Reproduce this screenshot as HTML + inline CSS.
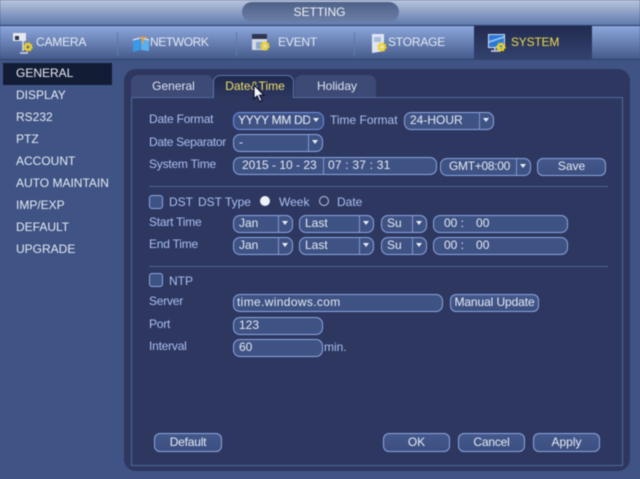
<!DOCTYPE html>
<html><head><meta charset="utf-8"><style>
html,body{margin:0;padding:0;width:640px;height:479px;overflow:hidden;background:#3f5384}
#r{position:relative;width:640px;height:479px;overflow:hidden;background:#3f5384;font-family:"Liberation Sans",sans-serif;font-size:12px;filter:blur(.5px)}
#r div{position:absolute;box-sizing:border-box;white-space:nowrap}
.l{color:#a9c0f2;line-height:14px}
.n{letter-spacing:-.22px}
.f{height:18px;border:1.5px solid #8ba6e0;border-radius:7px;background:#3f5284;color:#e6ebf5;line-height:15px;padding-left:5px}
.d{width:14px;top:0;bottom:0;right:0;border-left:1.5px solid #7f97cf}
.d:after{content:"";position:absolute;left:3px;top:5px;border:3.5px solid transparent;border-top:4px solid #e8edf8;border-bottom:0}
.b{height:19px;border:1.5px solid #8ba6e0;border-radius:6px;background:linear-gradient(#44588c,#3c4f80);color:#e6ebf5;text-align:center;line-height:16px}
.t{top:26px;height:34px;color:#e4eaf6;font-size:12px;line-height:32px;letter-spacing:-.2px}
.m{left:16px;color:#e6ebf5;line-height:14px;font-size:12px}
.s{width:1px;top:32px;height:24px;background:#5f78ad}
.hr{height:1px;background:#4d6595}
</style></head><body><div id="r">
<div style="left:0;top:0;width:640px;height:25px;background:linear-gradient(#b9c5dc,#5e7aae)"></div>
<div style="left:0;top:25px;width:640px;height:1px;background:#2c3b66"></div>
<div style="left:242px;top:2px;width:157px;height:20px;border-radius:10px;background:linear-gradient(#4f6188,#6c7fa6);color:#f0f3fa;text-align:center;line-height:20px;font-size:12px;padding-right:2px">SETTING</div>
<div style="left:0;top:26px;width:640px;height:34px;background:linear-gradient(#8ca7dc,#435888)"></div>
<div style="left:0;top:59px;width:640px;height:1px;background:#33436f"></div>
<div class="s" style="left:117px"></div><div class="s" style="left:236px"></div><div class="s" style="left:354px"></div>
<div style="left:474px;top:26px;width:118px;height:34px;background:linear-gradient(#222b50,#33436e)"></div>

<svg style="position:absolute;left:0;top:26px" width="640" height="34" viewBox="0 0 640 34">
<defs><g id="g"><circle r="2.7" fill="none" stroke="#f2d420" stroke-width="2.2"/><circle r="4.2" fill="none" stroke="#f2d420" stroke-width="1.2" stroke-dasharray="1.7 1.6"/></g></defs>
<path d="M13 7h13v8H13z" fill="#e6e9f0"/><rect x="15" y="10" width="4" height="4" fill="#2c3350"/><path d="M23 15v10M20 27h8" stroke="#d5dbe8" stroke-width="1.6"/><use href="#g" x="28" y="21"/>
<path d="M133 15l7-2v11l-7 2z" fill="#3a98e6"/><path d="M141 13l8 2v10l-8-1z" fill="#58b0f0"/><path d="M133 14l7-2M141 12l8 2" stroke="#dce9f7" stroke-width="1.2"/><path d="M139 11.5h8M143 11.5v6" stroke="#e8983a" stroke-width="1.6"/>
<rect x="252" y="8" width="15" height="5" fill="#2f3650"/><rect x="252" y="13" width="15" height="11" fill="#d3d9e6"/><rect x="256" y="16" width="7" height="7" fill="#8ea7d2"/><use href="#g" x="265" y="20"/>
<path d="M372 8h12v17l-12 2z" fill="#dfe6f4"/><path d="M374 11h7v5h-7z" fill="#a9bcdd"/><use href="#g" x="382" y="21"/>
<rect x="488.500" y="8.500" width="16" height="13" fill="#2a78d8" stroke="#d5dceb"/><path d="M489 15l15-5v2l-15 5z" fill="#8fc0f0"/><path d="M495 22v2M491 25h9" stroke="#cfd6e6" stroke-width="1.5"/><use href="#g" x="501" y="21"/>
</svg>
<div class="t" style="left:36px">CAMERA</div>
<div class="t" style="left:150px;letter-spacing:-.4px">NETWORK</div>
<div class="t" style="left:278px">EVENT</div>
<div class="t" style="left:388px">STORAGE</div>
<div class="t" style="left:511px;color:#eed94a">SYSTEM</div>

<div style="left:3px;top:63px;width:109px;height:22px;background:#131c35"></div>
<div class="m" style="top:66px">GENERAL</div>
<div class="m" style="top:88px">DISPLAY</div>
<div class="m" style="top:110px">RS232</div>
<div class="m" style="top:132px">PTZ</div>
<div class="m" style="top:154px">ACCOUNT</div>
<div class="m" style="top:176px">AUTO MAINTAIN</div>
<div class="m" style="top:198px">IMP/EXP</div>
<div class="m" style="top:220px">DEFAULT</div>
<div class="m" style="top:242px">UPGRADE</div>

<div style="left:124px;top:69px;width:506px;height:402px;border-radius:12px;background:#2e375f"></div>
<div style="left:131px;top:97px;width:492px;height:369px;border:1px solid #4d6a9d"></div>
<div style="left:131px;top:75px;width:82px;height:22px;border-radius:7px 7px 0 0;background:#3d4a76;color:#dfe5f2;text-align:center;line-height:22px;font-size:12px;padding-left:3px">General</div>
<div style="left:213px;top:75px;width:81px;height:23px;border:1.5px solid #5a78ab;border-bottom:0;border-radius:7px 7px 0 0;background:linear-gradient(#1f2a4e,#2e375f);color:#efe06a;text-align:center;line-height:21px;font-size:12px;padding-left:3px">Date&amp;Time</div>
<div style="left:295px;top:75px;width:81px;height:22px;border-radius:7px 7px 0 0;background:#3d4a76;color:#dfe5f2;text-align:center;line-height:22px;font-size:12px;padding-left:3px">Holiday</div>

<div class="l n" style="left:149px;top:112px">Date Format</div>
<div class="f" style="left:233px;top:112px;width:91px;border-color:#6f93e8;color:#f0f3fa;overflow:hidden;padding-left:4px;letter-spacing:-.3px">YYYY MM DD<div class="d" style="width:13px;border-left:0;background:#3f5284"></div></div>
<div class="l" style="left:330px;top:113px">Time Format</div>
<div class="f" style="left:404px;top:112px;width:90px">24-HOUR<div class="d"></div></div>
<div class="l n" style="left:149px;top:135px;letter-spacing:-.32px">Date Separator</div>
<div class="f" style="left:233px;top:134px;width:90px">-<div class="d"></div></div>
<div class="l n" style="left:149px;top:157px">System Time</div>
<div class="f" style="left:233px;top:157px;width:204px;padding-left:8px"><span>2015 - 10 - 23</span><div style="left:89px;top:0;bottom:0;width:1px;background:#7f97cf"></div><div style="left:94px;top:0;letter-spacing:.2px">07 : 37 : 31</div></div>
<div class="f" style="left:440px;top:158px;width:91px;padding-left:8px;letter-spacing:-.3px">GMT+08:00<div class="d"></div></div>
<div class="b" style="left:537px;top:158px;width:69px;height:18px;line-height:15px">Save</div>
<div class="hr" style="left:149px;top:186px;width:459px"></div>

<div style="left:149px;top:195px;width:14px;height:14px;border:1.5px solid #8ba6e0;border-radius:3px;background:#3f5284"></div>
<div class="l" style="left:169px;top:195px">DST</div>
<div class="l" style="left:198px;top:195px">DST Type</div>
<div style="left:260px;top:196px;width:10px;height:10px;border-radius:50%;background:#eef1f8"></div>
<div class="l" style="left:279px;top:195px">Week</div>
<div style="left:319px;top:196px;width:10px;height:10px;border-radius:50%;border:1.5px solid #b9c9ee"></div>
<div class="l" style="left:337px;top:195px">Date</div>

<div class="l n" style="left:149px;top:215px">Start Time</div>
<div class="f" style="left:233px;top:215px;width:60px">Jan<div class="d"></div></div>
<div class="f" style="left:299px;top:215px;width:75px">Last<div class="d"></div></div>
<div class="f" style="left:381px;top:215px;width:46px">Su<div class="d"></div></div>
<div class="f" style="left:433px;top:215px;width:135px;padding-left:10px">00 :<span style="margin-left:12px">00</span></div>
<div class="l n" style="left:149px;top:237px">End Time</div>
<div class="f" style="left:233px;top:237px;width:60px">Jan<div class="d"></div></div>
<div class="f" style="left:299px;top:237px;width:75px">Last<div class="d"></div></div>
<div class="f" style="left:381px;top:237px;width:46px">Su<div class="d"></div></div>
<div class="f" style="left:433px;top:237px;width:135px;padding-left:10px">00 :<span style="margin-left:12px">00</span></div>
<div class="hr" style="left:149px;top:266px;width:459px"></div>

<div style="left:149px;top:273px;width:14px;height:14px;border:1.5px solid #8ba6e0;border-radius:3px;background:#3f5284"></div>
<div class="l" style="left:169px;top:274px">NTP</div>
<div class="l n" style="left:149px;top:294px">Server</div>
<div class="f" style="left:233px;top:294px;width:210px;padding-left:3px;letter-spacing:.35px">time.windows.com</div>
<div class="b" style="left:450px;top:294px;width:89px;height:18px;line-height:15px;letter-spacing:-.1px">Manual Update</div>
<div class="l n" style="left:149px;top:317px">Port</div>
<div class="f" style="left:233px;top:317px;width:90px">123</div>
<div class="l n" style="left:149px;top:339px">Interval</div>
<div class="f" style="left:233px;top:339px;width:90px">60</div>
<div class="l" style="left:324px;top:340px">min.</div>

<div class="b" style="left:154px;top:433px;width:68px;letter-spacing:-.2px">Default</div>
<div class="b" style="left:383px;top:433px;width:67px">OK</div>
<div class="b" style="left:458px;top:433px;width:67px;letter-spacing:-.2px">Cancel</div>
<div class="b" style="left:533px;top:433px;width:67px">Apply</div>

<svg style="position:absolute;left:252px;top:84px" width="14" height="20" viewBox="0 0 14 20"><path d="M2 1v14l3.200-3 2.400 5.500 2.400-1-2.400-5.300H12z" fill="#f4f6fb" stroke="#0d1230" stroke-width="1.200"/></svg>
</div></body></html>
